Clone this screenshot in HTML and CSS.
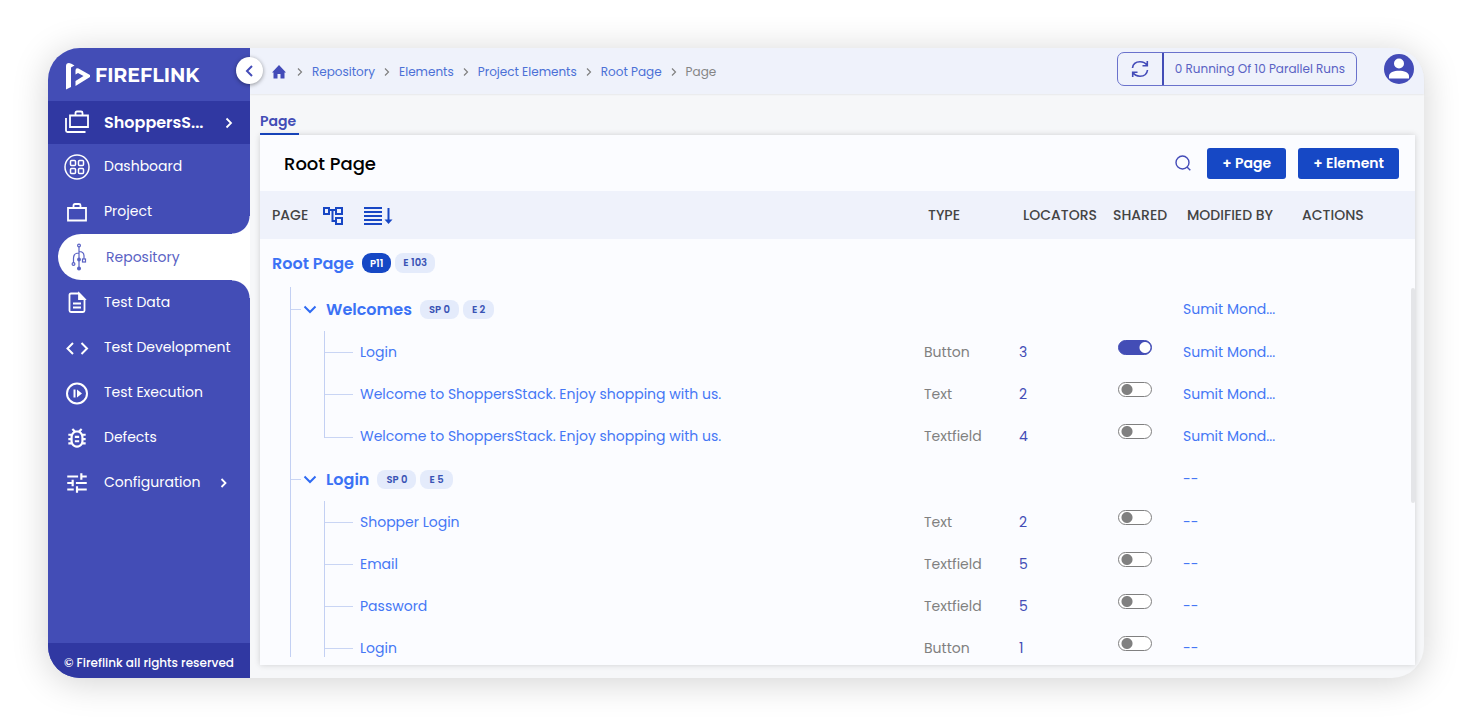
FILE: index.html
```html
<!DOCTYPE html>
<html lang="en">
<head>
<meta charset="utf-8">
<meta name="viewport" content="width=device-width, initial-scale=1">
<title>Fireflink - Root Page</title>
<link rel="stylesheet" href="styles.css">
</head>
<body>
<div class="app">
  <aside class="sidebar">
    <div class="brand">
      <svg class="brand-mark" width="26" height="28" viewBox="0 0 26 28" aria-hidden="true">
        <path d="M1 4Q1 1 4 1Q6 1 9.500 3.500L6 5.500V25L1 27.500Z" fill="#fff"/>
        <path d="M10.500 8.500Q10.500 5.500 13.500 6.500L25 13V15L10.500 24V19L18.500 14L13 11L10.500 12.500Z" fill="#fff"/>
      </svg>
      <span class="brand-name">FIREFLINK</span>
    </div>
    <button class="collapse" type="button" aria-label="Collapse menu">
      <svg width="10" height="14" viewBox="0 0 10 14" fill="none" stroke="#434bb8" stroke-width="2"><path d="M7 2L2 7L7 12"/></svg>
    </button>
    <button class="project-switch" type="button">
      <svg class="icon" width="26" height="26" viewBox="0 0 26 26" fill="none" stroke="currentColor" stroke-width="1.800"><path d="M6 5.500H24V17H6ZM11.500 5.500V3Q11.500 1.500 13 1.500H17Q18.500 1.500 18.500 3V5.500M2 8V20.500Q2 22 3.500 22H21.500"/></svg>
      <span class="project-name">ShoppersS...</span>
      <svg width="8" height="12" viewBox="0 0 8 12" fill="none" stroke="currentColor" stroke-width="1.800"><path d="M1.500 1.500L6 6L1.500 10.500"/></svg>
    </button>
    <nav class="nav">
      <a class="nav-item" href="#">
        <svg class="icon" width="26" height="26" viewBox="0 0 26 26" fill="none" stroke="currentColor" stroke-width="1.500"><circle cx="13" cy="13" r="12"/><rect x="6.500" y="6.500" width="5" height="5" rx="1"/><rect x="14.500" y="6.500" width="5" height="5" rx="1"/><rect x="6.500" y="14.500" width="5" height="5" rx="1"/><rect x="14.500" y="14.500" width="5" height="5" rx="1"/></svg>
        <span>Dashboard</span>
      </a>
      <a class="nav-item before-active" href="#">
        <svg class="icon" width="26" height="26" viewBox="0 0 26 26" fill="none" stroke="currentColor" stroke-width="1.800"><path d="M4 9H22V21.500H4ZM9.500 9V6.500Q9.500 5 11 5H15Q16.500 5 16.500 6.500V9"/></svg>
        <span>Project</span>
      </a>
      <a class="nav-item active" href="#" aria-current="page">
        <svg class="icon" width="26" height="28" viewBox="0 0 26 28" fill="none" stroke="currentColor" stroke-width="1.200"><path d="M13 3V25M13 10Q7.500 10 7.500 15V20M13 8.500Q18 8.500 18 13V16"/><circle cx="13" cy="2.500" r="1.400"/><circle cx="7.500" cy="21" r="1.400"/><rect x="16.500" y="16" width="3" height="3"/><circle cx="13" cy="16.500" r="1.300" fill="currentColor"/><circle cx="13" cy="25.500" r="1.400" fill="currentColor"/></svg>
        <span>Repository</span>
      </a>
      <a class="nav-item after-active" href="#">
        <svg class="icon" width="26" height="26" viewBox="0 0 26 26" fill="none" stroke="currentColor" stroke-width="1.800"><path d="M15 3.500H7Q5.500 3.500 5.500 5V20.500Q5.500 22 7 22H19Q20.500 22 20.500 20.500V9Z"/><path d="M15 3.500V9H20.500Z" fill="currentColor"/><path d="M9 13.500H17M9 17.500H17"/></svg>
        <span>Test Data</span>
      </a>
      <a class="nav-item" href="#">
        <svg class="icon" width="26" height="26" viewBox="0 0 26 26" fill="none" stroke="currentColor" stroke-width="2"><path d="M9 8L3.500 13.500L9 19M17.500 8L23 13.500L17.500 19"/></svg>
        <span>Test Development</span>
      </a>
      <a class="nav-item" href="#">
        <svg class="icon" width="26" height="26" viewBox="0 0 26 26" fill="none" stroke="currentColor" stroke-width="2"><circle cx="13" cy="13.500" r="10"/><path d="M10.500 9.500V17.500"/><path d="M13 9.500L18 13.500L13 17.500Z" fill="currentColor" stroke="none"/></svg>
        <span>Test Execution</span>
      </a>
      <a class="nav-item" href="#">
        <svg class="icon" width="26" height="26" viewBox="0 0 24 24" fill="currentColor"><path d="M20 8h-2.810c-.45-.78-1.070-1.450-1.820-1.960L17 4.410 15.590 3l-2.170 2.170C12.960 5.060 12.490 5 12 5s-.96.060-1.410.17L8.410 3 7 4.410l1.620 1.630C7.880 6.550 7.260 7.220 6.810 8H4v2h2.090c-.05.33-.09.66-.09 1v1H4v2h2v1c0 .34.040.67.090 1H4v2h2.810c1.040 1.790 2.970 3 5.190 3s4.150-1.210 5.190-3H20v-2h-2.090c.05-.33.090-.66.090-1v-1h2v-2h-2v-1c0-.34-.04-.67-.09-1H20V8zm-4 7c0 2.210-1.790 4-4 4s-4-1.790-4-4v-4c0-2.210 1.790-4 4-4s4 1.790 4 4v4zm-6-1h4v2h-4zm0-4h4v2h-4z"/></svg>
        <span>Defects</span>
      </a>
      <a class="nav-item" href="#">
        <svg class="icon" width="26" height="26" viewBox="0 0 24 24" fill="currentColor"><path d="M3 17v2h6v-2H3zM3 5v2h10V5H3zm10 16v-2h8v-2h-8v-2h-2v6h2zM7 9v2H3v2h4v2h2V9H7zm14 4v-2H11v2h10zm-6-4h2V7h4V5h-4V3h-2v6z"/></svg>
        <span>Configuration</span>
        <svg class="nav-arrow" width="8" height="12" viewBox="0 0 8 12" fill="none" stroke="currentColor" stroke-width="1.800"><path d="M1.500 2L5.500 6L1.500 10"/></svg>
      </a>
    </nav>
    <footer class="copyright">© Fireflink all rights reserved</footer>
  </aside>

  <div class="main">
    <header class="topbar">
      <nav class="crumbs" aria-label="Breadcrumb">
        <a href="#" aria-label="Home"><svg class="home" width="16" height="14" viewBox="0 0 16 14" fill="#434bb8"><path d="M7 0L14 7.500H12.500V13.500H8.500V9H5.500V13.500H1.500V7.500H0Z"/></svg></a>
        <svg class="sep" width="6" height="10" viewBox="0 0 6 10"><path d="M1 1.500L4.500 5L1 8.500"/></svg>
        <a href="#">Repository</a>
        <svg class="sep" width="6" height="10" viewBox="0 0 6 10"><path d="M1 1.500L4.500 5L1 8.500"/></svg>
        <a href="#">Elements</a>
        <svg class="sep" width="6" height="10" viewBox="0 0 6 10"><path d="M1 1.500L4.500 5L1 8.500"/></svg>
        <a href="#">Project Elements</a>
        <svg class="sep" width="6" height="10" viewBox="0 0 6 10"><path d="M1 1.500L4.500 5L1 8.500"/></svg>
        <a href="#">Root Page</a>
        <svg class="sep" width="6" height="10" viewBox="0 0 6 10"><path d="M1 1.500L4.500 5L1 8.500"/></svg>
        <span>Page</span>
      </nav>
      <div class="runs">
        <button class="refresh" type="button" aria-label="Refresh runs">
          <svg width="18" height="18" viewBox="0 0 18 18" fill="none" stroke="#434bb8" stroke-width="1.600"><path d="M1.500 8C2 4 5 1.800 9 1.800C12 1.800 14.500 3 16 5.500M16.300 1V5.700H11.500M16.500 10C16 14 13 16.200 9 16.200C6 16.200 3.500 15 2 12.500M1.700 17V12.300H6.500"/></svg>
        </button>
        <span class="runs-text">0 Running Of 10 Parallel Runs</span>
      </div>
      <button class="avatar" type="button" aria-label="Account">
        <svg width="30" height="30" viewBox="0 0 30 30"><circle cx="15" cy="15" r="15" fill="#434bb8"/><circle cx="15" cy="9.500" r="5" fill="#fff"/><path d="M5 24.500V22C5 18.500 10 16.800 15 16.800S25 18.500 25 22V24.500Z" fill="#fff"/></svg>
      </button>
    </header>

    <div class="tabs"><a class="tab" href="#" aria-current="page">Page</a></div>

    <section class="panel">
      <div class="panel-head">
        <h1 class="panel-title">Root Page</h1>
        <button class="search" type="button" aria-label="Search">
          <svg width="16" height="16" viewBox="0 0 16 16" fill="none" stroke="#434bb8" stroke-width="1.400"><circle cx="7.500" cy="7.500" r="6.500"/><path d="M12 12L15.300 15.300"/></svg>
        </button>
        <button class="btn" type="button">+ Page</button>
        <button class="btn" type="button">+ Element</button>
      </div>
      <div class="scroller">
        <table class="tree">
          <colgroup><col><col class="col-type"><col class="col-loc"><col class="col-shared"><col class="col-mod"><col class="col-act"></colgroup>
          <thead>
            <tr>
              <th class="th-page"><div class="page-tools">PAGE
                <button type="button" aria-label="Tree view"><svg width="22" height="24" viewBox="0 0 22 24" fill="none" stroke="#1847c4" stroke-width="2"><rect x="2" y="5" width="5" height="6"/><rect x="14" y="5" width="6" height="6"/><rect x="14" y="15" width="6" height="6"/><path d="M7 7H14M10.500 7V18H14"/></svg></button>
                <button type="button" aria-label="Sort order"><svg width="30" height="24" viewBox="0 0 30 24" fill="none" stroke="#1847c4" stroke-width="2"><path d="M1 5H19M1 9H19M1 13H19M1 17H19M1 21H19M25.500 5V19"/><path d="M21.500 16.500H29.500L25.500 21Z" fill="#1847c4" stroke="none"/></svg></button>
              </div></th>
              <th>TYPE</th><th>LOCATORS</th><th class="th-shared">SHARED</th><th>MODIFIED BY</th><th class="th-act">ACTIONS</th>
            </tr>
          </thead>
          <tbody>
            <tr><td><div class="node root"><a class="page-link" href="#">Root Page</a><span class="badge solid">P11</span><span class="badge tall">E 103</span></div></td><td></td><td></td><td></td><td></td><td></td></tr>

            <tr><td><div class="node page"><span class="guide"><i class="stub"></i></span><button class="twisty" type="button" aria-label="Collapse Welcomes"><svg width="14" height="9" viewBox="0 0 14 9"><path d="M1.500 1.500L7 7L12.500 1.500"/></svg></button><a class="page-link" href="#">Welcomes</a><span class="badge">SP 0</span><span class="badge">E 2</span></div></td><td></td><td></td><td></td><td><a href="#">Sumit Mond...</a></td><td></td></tr>
            <tr><td><div class="node"><span class="guide"></span><span class="branch"><i class="stub"></i></span><a href="#">Login</a></div></td><td class="type">Button</td><td class="loc">3</td><td class="shared"><input class="toggle" type="checkbox" aria-label="Share Login" checked></td><td><a href="#">Sumit Mond...</a></td><td></td></tr>
            <tr><td><div class="node"><span class="guide"></span><span class="branch"><i class="stub"></i></span><a href="#">Welcome to ShoppersStack. Enjoy shopping with us.</a></div></td><td class="type">Text</td><td class="loc">2</td><td class="shared"><input class="toggle" type="checkbox" aria-label="Share welcome text"></td><td><a href="#">Sumit Mond...</a></td><td></td></tr>
            <tr><td><div class="node"><span class="guide"></span><span class="branch last"><i class="stub"></i></span><a href="#">Welcome to ShoppersStack. Enjoy shopping with us.</a></div></td><td class="type">Textfield</td><td class="loc">4</td><td class="shared"><input class="toggle" type="checkbox" aria-label="Share welcome textfield"></td><td><a href="#">Sumit Mond...</a></td><td></td></tr>

            <tr><td><div class="node page"><span class="guide"><i class="stub"></i></span><button class="twisty" type="button" aria-label="Collapse Login"><svg width="14" height="9" viewBox="0 0 14 9"><path d="M1.500 1.500L7 7L12.500 1.500"/></svg></button><a class="page-link" href="#">Login</a><span class="badge">SP 0</span><span class="badge">E 5</span></div></td><td></td><td></td><td></td><td><a href="#">--</a></td><td></td></tr>
            <tr><td><div class="node"><span class="guide"></span><span class="branch"><i class="stub"></i></span><a href="#">Shopper Login</a></div></td><td class="type">Text</td><td class="loc">2</td><td class="shared"><input class="toggle" type="checkbox" aria-label="Share Shopper Login"></td><td><a href="#">--</a></td><td></td></tr>
            <tr><td><div class="node"><span class="guide"></span><span class="branch"><i class="stub"></i></span><a href="#">Email</a></div></td><td class="type">Textfield</td><td class="loc">5</td><td class="shared"><input class="toggle" type="checkbox" aria-label="Share Email"></td><td><a href="#">--</a></td><td></td></tr>
            <tr><td><div class="node"><span class="guide"></span><span class="branch"><i class="stub"></i></span><a href="#">Password</a></div></td><td class="type">Textfield</td><td class="loc">5</td><td class="shared"><input class="toggle" type="checkbox" aria-label="Share Password"></td><td><a href="#">--</a></td><td></td></tr>
            <tr><td><div class="node"><span class="guide"></span><span class="branch"><i class="stub"></i></span><a href="#">Login</a></div></td><td class="type">Button</td><td class="loc">1</td><td class="shared"><input class="toggle" type="checkbox" aria-label="Share Login button"></td><td><a href="#">--</a></td><td></td></tr>
          </tbody>
        </table>
        <span class="thumb"></span>
      </div>
    </section>
  </div>
</div>
</body>
</html>
```
FILE: styles.css
```css
* { box-sizing: border-box; }

body {
  margin: 0;
  padding: 48px;
  background: #fff;
  color: #3c3c3c;
  font-family: Poppins, Inter, "Liberation Sans", sans-serif;
  font-size: 14px;
}

a { color: inherit; text-decoration: none; }

button {
  border: 0;
  padding: 0;
  background: none;
  color: inherit;
  font: inherit;
  cursor: pointer;
}

svg { display: block; flex: none; }

.app {
  display: flex;
  height: calc(100vh - 96px);
  border-radius: 32px;
  background: #f6f7f9;
  box-shadow: 0 4px 36px rgba(0, 0, 0, 0.18);
}

/* Sidebar */
.sidebar {
  position: relative;
  display: flex;
  flex-direction: column;
  flex: none;
  width: 202px;
  border-radius: 32px 0 0 32px;
  background: #434db6;
  color: #fff;
}

.brand {
  display: flex;
  align-items: center;
  gap: 4px;
  height: 53px;
  padding: 2px 0 0 17px;
}

.brand-name {
  font-family: Montserrat, Poppins, Inter, sans-serif;
  font-size: 19px;
  font-weight: 700;
}

.collapse {
  position: absolute;
  top: 9px;
  right: -13px;
  display: grid;
  place-items: center;
  width: 27px;
  height: 27px;
  border-radius: 50%;
  background: #fff;
  box-shadow: 0 1px 4px rgba(0, 0, 0, 0.4);
}

.project-switch {
  display: flex;
  align-items: center;
  height: 43px;
  padding: 0 17px 0 16px;
  background: #3038a2;
  font-size: 16px;
  font-weight: 600;
  text-align: left;
}

.icon { margin-right: 14px; }
.project-name { flex: 1; }

.nav { flex: 1; }

.nav-item {
  display: flex;
  align-items: center;
  height: 45px;
  padding-left: 16px;
  white-space: nowrap;
}

.nav-item.active {
  height: 46px;
  margin-left: 10px;
  padding-left: 8px;
  border-radius: 23px 0 0 23px;
  background: #fff;
  color: #5a62c4;
}

.before-active { background: radial-gradient(circle at 0 0, transparent 17px, #fff 18px) right bottom / 18px 18px no-repeat; }
.after-active { background: radial-gradient(circle at 0 100%, transparent 17px, #fff 18px) right top / 18px 18px no-repeat; }

.nav-arrow { margin-left: 20px; }

.copyright {
  height: 35px;
  padding-top: 3px;
  border-radius: 0 0 0 32px;
  background: #3038a2;
  font-size: 12px;
  font-weight: 500;
  line-height: 34px;
  text-align: center;
}

/* Main column */
.main {
  display: flex;
  flex: 1;
  flex-direction: column;
  min-width: 0;
}

.topbar {
  display: flex;
  align-items: center;
  height: 46px;
  padding: 0 10px 5px 22px;
  border-radius: 0 32px 0 0;
  background: #eff2fb;
  box-shadow: 0 1px 2px rgba(0, 0, 0, 0.06);
}

.crumbs {
  display: flex;
  align-items: center;
  flex: 1;
  gap: 9px;
  padding-top: 6px;
  color: #4b70d6;
  font-size: 12px;
  white-space: nowrap;
}

.crumbs span { color: #858585; }
.sep { fill: none; stroke: #808080; stroke-width: 1.2; }

.runs {
  display: flex;
  align-items: stretch;
  height: 34px;
  margin-right: 27px;
  border: 1px solid #6a72cc;
  border-radius: 7px;
  color: #5a62c4;
  font-size: 12px;
  line-height: 32px;
}

.refresh {
  display: grid;
  place-items: center;
  width: 46px;
  border-right: 2px solid #434db6;
}

.runs-text { padding: 0 11px; }

.tabs { display: flex; padding: 14px 10px 0; }

.tab {
  height: 27px;
  padding-right: 3px;
  border-bottom: 2px solid #1847c4;
  color: #434db6;
  font-weight: 600;
  line-height: 27px;
}

.panel {
  display: flex;
  flex: 1;
  flex-direction: column;
  min-height: 0;
  margin: 0 9px 13px 10px;
  background: #fbfcff;
  box-shadow: 0 0 6px rgba(0, 0, 0, 0.16);
}

.panel-head {
  display: flex;
  align-items: center;
  gap: 12px;
  height: 56px;
  padding: 0 16px 0 24px;
}

.panel-title {
  flex: 1;
  margin: 0;
  color: #000;
  font-size: 18px;
  font-weight: 500;
}

.search { margin-right: 4px; }

.btn {
  height: 31px;
  padding: 0 15px;
  border-radius: 3px;
  background: #1648c5;
  color: #fff;
  font-weight: 600;
}

/* Tree table */
.scroller {
  position: relative;
  flex: 1;
  min-height: 0;
  margin-bottom: 8px;
  overflow: hidden;
}

.tree {
  width: 100%;
  border-collapse: collapse;
  table-layout: fixed;
  color: #4577f5;
}

.col-type { width: 95px; }
.col-loc { width: 94px; }
.col-shared { width: 70px; }
.col-mod { width: 119px; }
.col-act { width: 113px; }

.tree th {
  height: 48px;
  padding: 0 0 0 4px;
  background: #eff2fb;
  color: #444;
  font-size: 14px;
  font-weight: 500;
  text-align: left;
  white-space: nowrap;
  -webkit-text-stroke: 0;
}

.tree .th-page { padding-left: 12px; }
.tree .th-shared, .tree .th-act { padding-left: 0; }

.page-tools { display: flex; align-items: center; gap: 14px; }
.page-tools button { margin-right: 5px; }

.tree td { padding: 0; }

.node {
  display: flex;
  align-items: center;
  height: 42px;
  padding-left: 30px;
  white-space: nowrap;
}

.node.root { height: 48px; padding-left: 12px; }
.node.page { height: 44px; }

.guide, .branch {
  display: flex;
  align-items: center;
  align-self: stretch;
  flex: none;
  width: 34px;
  border-left: 1px solid #c3d0f3;
}

.node.page .guide { width: 13px; }
.branch { width: 36px; }
.branch.last { align-self: flex-start; height: 23px; align-items: flex-end; }

.stub { width: 28px; border-top: 1px solid #c9d5f4; }
.guide .stub { width: 10px; }

.twisty { width: 14px; margin-right: 9px; }
.twisty path { fill: none; stroke: #2f6bf3; stroke-width: 2; }

.page-link {
  margin-right: 8px;
  color: #3b72f5;
  font-size: 16px;
  font-weight: 600;
}

.badge {
  height: 19px;
  margin-right: 4px;
  padding: 0 9px;
  border-radius: 8px;
  background: #e4ebfb;
  color: #3953b4;
  font-size: 10px;
  font-weight: 600;
  line-height: 19px;
}

.badge.tall { height: 20px; padding: 0 8px; line-height: 20px; }

.badge.solid {
  height: 20px;
  padding: 0 8px;
  border-radius: 9px;
  background: #1648c5;
  color: #fff;
  line-height: 21px;
}

.type { color: #808080; }
.loc { color: #434db6; }
.tree .shared { padding: 0 0 10px 5px; }

.toggle {
  display: block;
  appearance: none;
  width: 34px;
  height: 15px;
  margin: 0;
  border: 1px solid #808080;
  border-radius: 8px;
  background: radial-gradient(circle at 8px 50%, #808080 5px, transparent 6px) #fff;
}

.toggle:checked {
  border-color: #434db6;
  background: radial-gradient(circle at 26px 50%, #fff 5px, transparent 6px) #434db6;
}

.thumb {
  position: absolute;
  top: 97px;
  right: 0;
  width: 4px;
  height: 215px;
  border-radius: 2px;
  background: #e4e5e8;
}
```
